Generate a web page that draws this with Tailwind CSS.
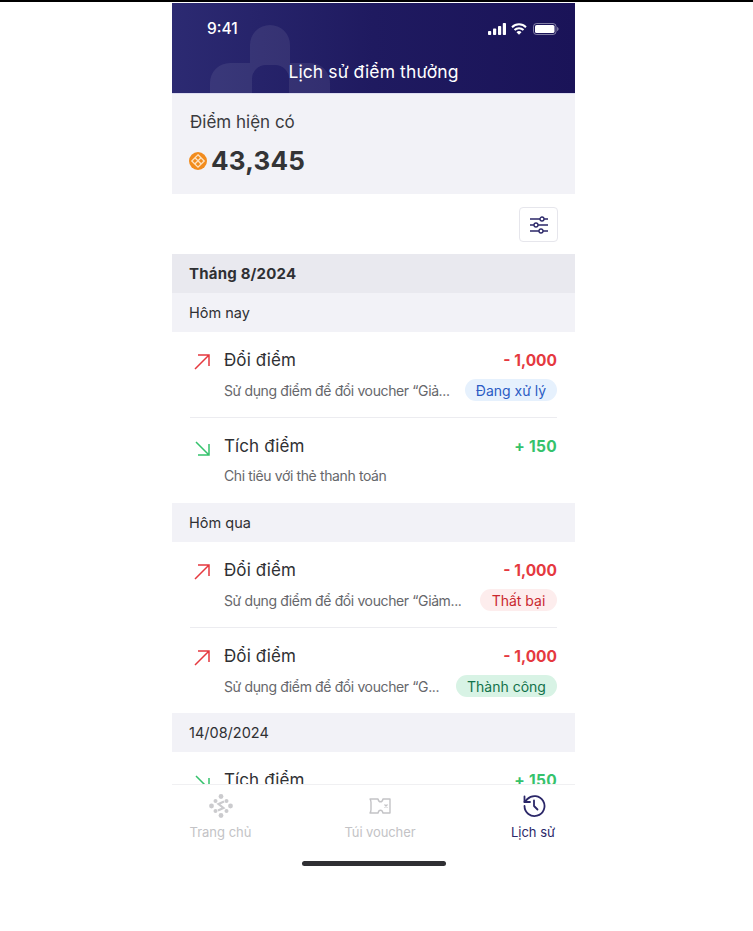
<!DOCTYPE html>
<html lang="en">
<head>
<meta charset="UTF-8" />
<title>Lịch sử điểm thưởng</title>
<script src="https://cdn.jsdelivr.net/npm/@tailwindcss/browser@4"></script>
</head>
<body class="m-0 bg-white overflow-hidden h-[931px] font-['Inter','Noto_Sans',sans-serif] text-[#2f3033]">
<div class="h-[2px] bg-black"></div>
<div class="ml-[172px] w-[403px] mt-px">

  <!-- header -->
  <header class="relative h-[90px] overflow-hidden bg-gradient-to-r from-[#2c2a72] via-[#1f1a60] to-[#1a1358] text-white">
    <svg class="absolute left-[38px] top-[22px]" width="120" height="68" viewBox="0 0 120 68" fill="#ffffff" fill-opacity="0.08">
      <path d="M40 20a20 20 0 0 1 40 0v18h20a20 20 0 0 1 20 20v10H79V54a14 14 0 0 0-14-14H56a14 14 0 0 0-14 14v14H0V58a20 20 0 0 1 20-20h20z"/>
    </svg>
    <div class="relative flex items-center justify-between pl-[35px] pr-[16px] pt-[15px] h-[36px]">
      <span class="text-[15.5px] font-medium leading-[20px]">9:41</span>
      <div class="flex items-center gap-[5px]">
        <svg width="18" height="12" viewBox="0 0 18 12" fill="#fff"><rect x="0" y="8" width="3.200" height="4" rx="0.8"/><rect x="5" y="5.500" width="3.200" height="6.500" rx="0.8"/><rect x="10" y="3" width="3.200" height="9" rx="0.8"/><rect x="14.800" y="0" width="3.200" height="12" rx="0.8"/></svg>
        <svg width="16" height="12" viewBox="0 0 16 12" fill="none" stroke="#fff" stroke-width="2"><path d="M1 4.200a10 10 0 0 1 14 0"/><path d="M3.500 7a6.400 6.400 0 0 1 9 0"/><path d="M8 11.800l-2.500-2.600a3.400 3.400 0 0 1 5 0z" fill="#fff" stroke="none"/></svg>
        <svg class="ml-[1px]" width="26" height="12" viewBox="0 0 26 12" fill="none"><rect x="0.500" y="0.500" width="22.500" height="11" rx="3" stroke="#fff" stroke-opacity="0.45"/><rect x="2" y="2" width="19.500" height="8" rx="1.600" fill="#fff"/><path d="M24.200 4v4c.8-.3 1.300-1.100 1.300-2s-.5-1.700-1.300-2z" fill="#fff" fill-opacity="0.5"/></svg>
      </div>
    </div>
    <h1 class="relative text-center text-[17.5px] font-normal leading-[24px] mt-[21px] tracking-[0.1px]">Lịch sử điểm thưởng</h1>
  </header>

  <!-- balance -->
  <section class="h-[101px] bg-[#f2f2f7] border-t border-[#dcdcf0] px-[18px] pt-[16px]">
    <p class="text-[17px] leading-[24px] text-[#3a3b3e]">Điểm hiện có</p>
    <div class="flex items-center gap-[4px] mt-[11px] h-[32px] -ml-px">
      <svg width="18" height="18" viewBox="0 0 18 18">
        <circle cx="9" cy="9" r="9" fill="#f28c1e"/>
        <g fill="none" stroke="#fde3c2" stroke-width="1.300"><path d="M9 2.800L15.200 9 9 15.200 2.800 9z"/><path d="M6 5.800l6.200 6.200M12 5.800L5.800 12"/></g>
      </svg>
      <span class="text-[26px] font-bold leading-[32px] tracking-[0.2px] text-[#333436]">43,345</span>
    </div>
  </section>

  <!-- filter -->
  <div class="h-[60px] flex justify-end items-start pt-[13px] pr-[17px]">
    <button class="w-[39px] h-[35px] border border-[#e6e6ec] rounded-[4px] flex items-center justify-center bg-white">
      <svg width="20" height="18" viewBox="0 0 20 18" fill="none" stroke="#2b2768" stroke-width="1.300">
        <path d="M1 3h18M1 9h18M1 15h18"/>
        <circle cx="13" cy="3" r="2" fill="#fff"/><circle cx="7" cy="9" r="2" fill="#fff"/><circle cx="12" cy="15" r="2" fill="#fff"/>
      </svg>
    </button>
  </div>

  <!-- list -->
  <div class="h-[530px] overflow-hidden">
    <div class="h-[39px] bg-[#e9e9ef] px-[17px] pt-px flex items-center text-[15px] font-bold tracking-[0.2px]">Tháng 8/2024</div>

    <div class="h-[39px] bg-[#f2f2f7] px-[17px] flex items-center text-[14.5px]">Hôm nay</div>
    <div class="mx-[18px] h-[85.5px] border-b border-[#ececf0] flex">
      <svg class="ml-[4px] mt-[22px] shrink-0" width="16" height="16" viewBox="0 0 16 16" fill="none" stroke="#e5393f" stroke-width="1.500"><path d="M1 15L15 1M4 1H15V12"/></svg>
      <div class="ml-[14px] flex-1 min-w-0">
        <div class="flex justify-between items-center mt-[18px] h-[22px]">
          <span class="text-[17px] tracking-[0.1px]">Đổi điểm</span>
          <span class="text-[15.5px] font-bold text-[#e5393f]">- 1,000</span>
        </div>
        <div class="flex justify-between items-center mt-[7px] h-[22px]">
          <span class="text-[14px] text-[#66676b] tracking-[-0.38px] truncate">Sử dụng điểm để đổi voucher “Giả...</span>
          <span class="h-[22px] w-[92px] rounded-full bg-[#e6f1fd] text-[#2b5cc4] text-[14px] flex items-center justify-center shrink-0">Đang xử lý</span>
        </div>
      </div>
    </div>
    <div class="mx-[18px] h-[85.5px] flex">
      <svg class="ml-[5px] mt-[23px] shrink-0" width="15" height="15" viewBox="0 0 15 15" fill="none" stroke="#35c26c" stroke-width="1.500"><path d="M1 1L14 14M14 3V14H3"/></svg>
      <div class="ml-[14px] flex-1 min-w-0">
        <div class="flex justify-between items-center mt-[18px] h-[22px]">
          <span class="text-[17px] tracking-[0.1px]">Tích điểm</span>
          <span class="text-[15.5px] font-bold text-[#35c26c] tracking-[0.3px]">+ 150</span>
        </div>
        <div class="mt-[7px] h-[22px] flex items-center text-[14px] text-[#66676b] tracking-[-0.38px]">Chi tiêu với thẻ thanh toán</div>
      </div>
    </div>

    <div class="h-[39px] bg-[#f2f2f7] px-[17px] flex items-center text-[14.5px]">Hôm qua</div>
    <div class="mx-[18px] h-[86px] border-b border-[#ececf0] flex">
      <svg class="ml-[4px] mt-[22px] shrink-0" width="16" height="16" viewBox="0 0 16 16" fill="none" stroke="#e5393f" stroke-width="1.500"><path d="M1 15L15 1M4 1H15V12"/></svg>
      <div class="ml-[14px] flex-1 min-w-0">
        <div class="flex justify-between items-center mt-[18px] h-[22px]">
          <span class="text-[17px] tracking-[0.1px]">Đổi điểm</span>
          <span class="text-[15.5px] font-bold text-[#e5393f]">- 1,000</span>
        </div>
        <div class="flex justify-between items-center mt-[7px] h-[22px]">
          <span class="text-[14px] text-[#66676b] tracking-[-0.38px] truncate">Sử dụng điểm để đổi voucher “Giảm...</span>
          <span class="h-[22px] w-[77px] rounded-full bg-[#fdeded] text-[#c9282d] text-[14px] flex items-center justify-center shrink-0">Thất bại</span>
        </div>
      </div>
    </div>
    <div class="mx-[18px] h-[85px] flex">
      <svg class="ml-[4px] mt-[22px] shrink-0" width="16" height="16" viewBox="0 0 16 16" fill="none" stroke="#e5393f" stroke-width="1.500"><path d="M1 15L15 1M4 1H15V12"/></svg>
      <div class="ml-[14px] flex-1 min-w-0">
        <div class="flex justify-between items-center mt-[18px] h-[22px]">
          <span class="text-[17px] tracking-[0.1px]">Đổi điểm</span>
          <span class="text-[15.5px] font-bold text-[#e5393f]">- 1,000</span>
        </div>
        <div class="flex justify-between items-center mt-[7px] h-[22px]">
          <span class="text-[14px] text-[#66676b] tracking-[-0.38px] truncate">Sử dụng điểm để đổi voucher “G...</span>
          <span class="h-[22px] w-[101px] rounded-full bg-[#d8f3e5] text-[#12724a] text-[14px] flex items-center justify-center shrink-0">Thành công</span>
        </div>
      </div>
    </div>

    <div class="h-[39px] bg-[#f2f2f7] px-[17px] flex items-center text-[14.5px]">14/08/2024</div>
    <div class="mx-[18px] h-[85px] flex">
      <svg class="ml-[5px] mt-[23px] shrink-0" width="15" height="15" viewBox="0 0 15 15" fill="none" stroke="#35c26c" stroke-width="1.500"><path d="M1 1L14 14M14 3V14H3"/></svg>
      <div class="ml-[14px] flex-1 min-w-0">
        <div class="flex justify-between items-center mt-[18px] h-[22px]">
          <span class="text-[17px] tracking-[0.1px]">Tích điểm</span>
          <span class="text-[15.5px] font-bold text-[#35c26c] tracking-[0.3px]">+ 150</span>
        </div>
      </div>
    </div>
  </div>

  <!-- bottom nav -->
  <nav class="h-[62px] border-t border-[#f0f0f2] bg-white flex items-start text-[13px] text-[#c3c3c6] pt-[9px]">
    <div class="w-[97px] flex flex-col items-center">
      <svg width="24" height="24" viewBox="0 0 24 24" fill="#cbcbce">
        <circle cx="12" cy="2.500" r="2.400"/><circle cx="6.500" cy="7" r="2"/><circle cx="2.500" cy="12" r="2.400"/><circle cx="6.500" cy="17" r="2"/><circle cx="12" cy="21.500" r="2.400"/><circle cx="17.500" cy="17" r="2"/><circle cx="21.500" cy="12" r="2.400"/><circle cx="17.500" cy="7" r="2"/>
        <path d="M15 7.500L9.500 10l5 4-5.500 2.500" fill="none" stroke="#cbcbce" stroke-width="2.200"/>
      </svg>
      <span class="mt-[5px] leading-[18px]">Trang chủ</span>
    </div>
    <div class="w-[220px] flex flex-col items-center pl-[2px]">
      <svg width="24" height="24" viewBox="0 0 24 24" fill="none" stroke="#c3c3c6" stroke-width="1.400">
        <path d="M2 5h8c.4 1.800 1.300 2.800 2.500 2.800S14.600 6.800 15 5h7v14h-7c-.4-1.800-1.300-2.800-2.500-2.800S10.400 17.200 10 19H2c.8-1.300 1-2.300 1-3.500v-7C3 7.300 2.800 6.300 2 5z" stroke-linejoin="round"/>
        <path d="M16.500 10.500l3 3m0-3l-3 3" stroke-width="1.200"/>
      </svg>
      <span class="mt-[5px] leading-[18px] tracking-[-0.1px]">Túi voucher</span>
    </div>
    <div class="flex-1 flex flex-col items-center text-[#2b2768] pl-[2px]">
      <svg class="ml-[2px]" width="24" height="24" viewBox="0 0 24 24" fill="none" stroke="#2b2768" stroke-width="1.800" stroke-linecap="round" stroke-linejoin="round">
        <path d="M2.500 12a10 10 0 1 0 2.900-7L2.500 8"/><path d="M2.500 2.500V8H8"/><path d="M12 6.500V12l3.500 3.500"/>
      </svg>
      <span class="mt-[5px] leading-[18px]">Lịch sử</span>
    </div>
  </nav>

  <div class="h-[5px] w-[144px] rounded-full bg-[#2f2f33] mx-auto mt-[15px]"></div>
</div>
</body>
</html>
